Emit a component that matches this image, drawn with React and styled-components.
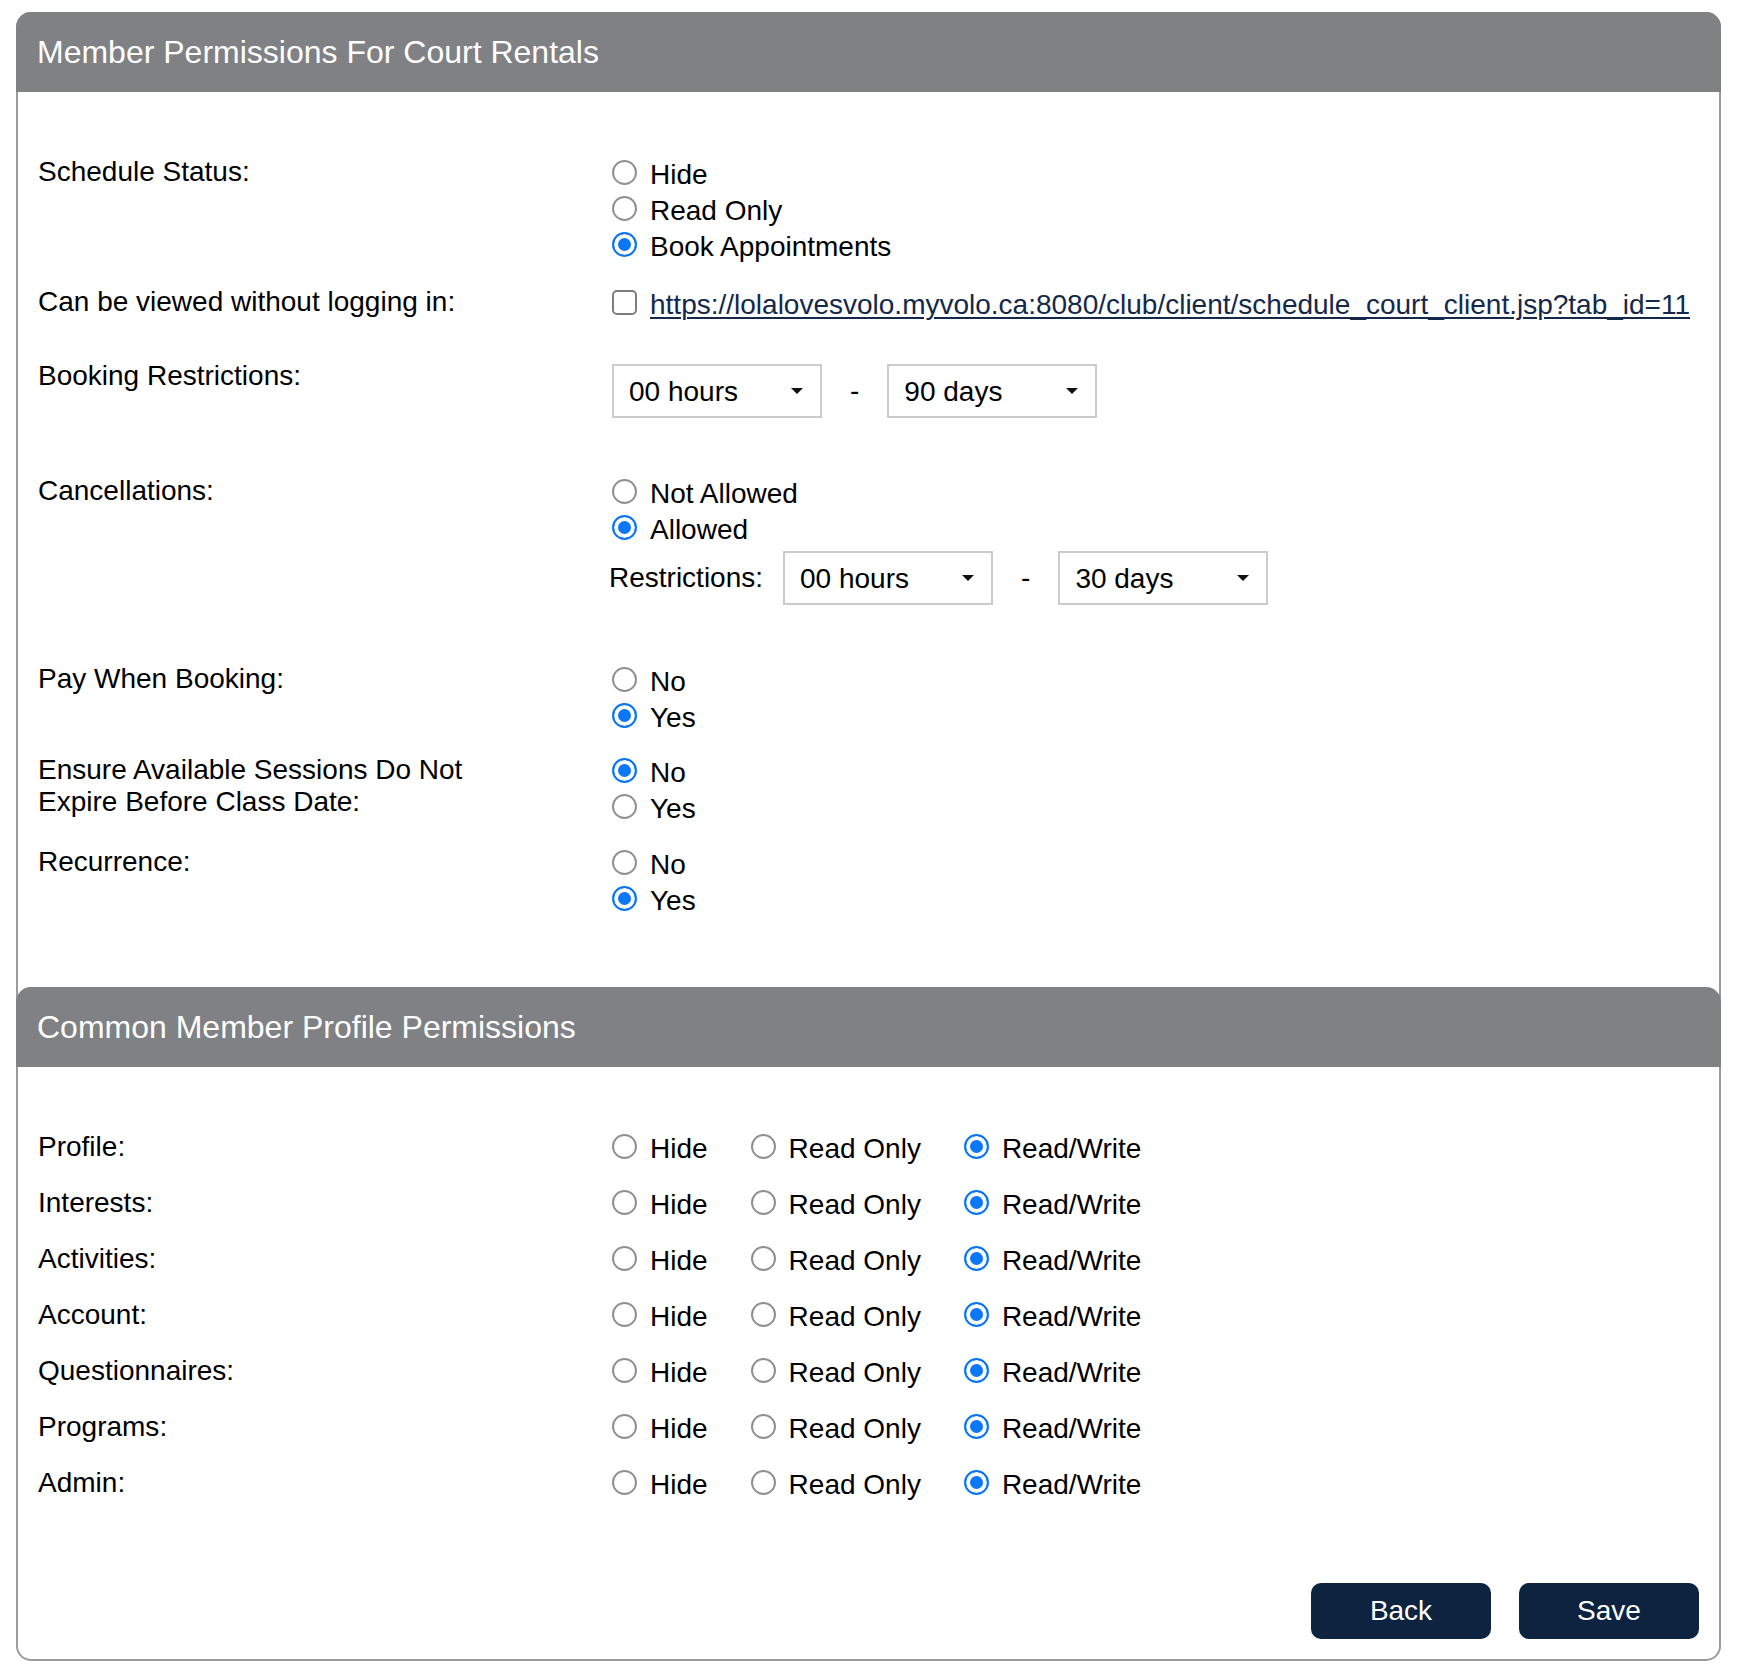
import React from 'react';
import styled, { createGlobalStyle } from 'styled-components';

const GlobalStyle = createGlobalStyle`
  body {
    margin: 0;
    background: #fff;
    color: #000;
    font-family: "Liberation Sans", Arial, Helvetica, sans-serif;
  }
`;

const Page = styled.div`
  padding: 12px 19px 14px 16px;
`;

const Card = styled.div`
  border: 2px solid #9b9b9b;
  border-radius: 15px;
  background: #fff;
`;

const Header = styled.div`
  height: 80px;
  margin: ${p => (p.$first ? '-2px -2px 0' : '0 -2px')};
  padding-left: 21px;
  display: flex;
  align-items: center;
  background: #808185;
  border-radius: 15px 15px 0 0;
  color: #fff;
  font-size: 32px;
`;

const Body = styled.div`
  padding: ${p => p.$pad};
`;

const Row = styled.div`
  display: grid;
  grid-template-columns: 574px 1fr;
  align-items: start;
  margin-bottom: ${p => p.$after || 0}px;
`;

const Label = styled.div`
  font-size: 28px;
  line-height: ${p => p.$lh || 36}px;
  padding-top: ${p => p.$top || 0}px;
`;

const Options = styled.div`
  display: flex;
  flex-direction: column;
  padding-top: 3px;
`;

const Option = styled.label`
  display: flex;
  align-items: center;
  gap: 13px;
  height: 36px;
  font-size: 28px;
  white-space: nowrap;
`;

const Radio = styled.input.attrs({ type: 'radio' })`
  appearance: none;
  flex: none;
  width: 25px;
  height: 25px;
  margin: 0 0 6px;
  border: 2px solid #909090;
  border-radius: 50%;
  background: #fff;

  &:checked {
    border-color: #0b76f6;
    background: #0b76f6;
    box-shadow: inset 0 0 0 4px #fff;
  }
`;

const Checkbox = styled.input.attrs({ type: 'checkbox' })`
  appearance: none;
  flex: none;
  width: 25px;
  height: 25px;
  margin: 0 0 6px;
  border: 2px solid #7d7d7d;
  border-radius: 5px;
  background: #fff;
`;

const Link = styled.a`
  color: #14284b;
  text-decoration: underline;
  text-underline-offset: 3px;
  text-decoration-thickness: 2px;
`;

const Range = styled.div`
  display: flex;
  align-items: center;
  margin-top: ${p => p.$top || 0}px;
`;

const Dash = styled.span`
  margin: 0 28px;
  font-size: 28px;
`;

const SelectWrap = styled.div`
  position: relative;
  flex: none;
  width: 210px;
  height: 54px;
`;

const Select = styled.select`
  appearance: none;
  box-sizing: border-box;
  width: 100%;
  height: 100%;
  padding: 0 0 0 15px;
  border: 2px solid #cbcbcb;
  border-radius: 0;
  background: #fff;
  color: #000;
  font-family: inherit;
  font-size: 28px;
  outline: none;
`;

const Caret = styled.svg`
  position: absolute;
  top: 50%;
  right: 19px;
  width: 12px;
  height: 6px;
  margin-top: -3px;
  pointer-events: none;
`;

const Restrictions = styled.div`
  display: flex;
  align-items: center;
  gap: 20px;
  margin: 3px 0 0 -3px;
  font-size: 28px;
`;

const PermRow = styled.div`
  display: grid;
  grid-template-columns: 574px 1fr;
  align-items: center;
  height: 56px;
`;

const Inline = styled.div`
  display: flex;
  gap: 43px;
  margin-top: 4px;
`;

const Footer = styled.div`
  display: flex;
  justify-content: flex-end;
  gap: 28px;
  padding: 72px 20px 20px;
`;

const Button = styled.button`
  width: 180px;
  height: 56px;
  border: none;
  border-radius: 10px;
  background: #0d2340;
  color: #fff;
  font-family: inherit;
  font-size: 28px;
  cursor: pointer;
`;

const Dropdown = ({ value, options }) => (
  <SelectWrap>
    <Select defaultValue={value}>
      {options.map(o => <option key={o}>{o}</option>)}
    </Select>
    <Caret viewBox="0 0 12 6">
      <path d="M0 0h12L6 6z" fill="#111" />
    </Caret>
  </SelectWrap>
);

const hours = ['00 hours', '01 hours', '02 hours', '06 hours', '12 hours', '24 hours'];
const days = ['7 days', '14 days', '30 days', '60 days', '90 days'];

const RadioList = ({ name, items, checked }) => (
  <Options>
    {items.map(item => (
      <Option key={item}>
        <Radio name={name} defaultChecked={item === checked} />
        {item}
      </Option>
    ))}
  </Options>
);

const profileRows = ['Profile', 'Interests', 'Activities', 'Account', 'Questionnaires', 'Programs', 'Admin'];
const levels = ['Hide', 'Read Only', 'Read/Write'];

const App = () => {
  return (
    <>
      <GlobalStyle />
      <Page>
        <Card>
          <Header $first>Member Permissions For Court Rentals</Header>
          <Body $pad="62px 20px 68px">
            <Row $after={19}>
              <Label>Schedule Status:</Label>
              <RadioList name="schedule" items={['Hide', 'Read Only', 'Book Appointments']} checked="Book Appointments" />
            </Row>
            <Row $after={35}>
              <Label>Can be viewed without logging in:</Label>
              <Options>
                <Option>
                  <Checkbox />
                  <Link href="#">https://lolalovesvolo.myvolo.ca:8080/club/client/schedule_court_client.jsp?tab_id=11</Link>
                </Option>
              </Options>
            </Row>
            <Row $after={55}>
              <Label>Booking Restrictions:</Label>
              <Range $top={6}>
                <Dropdown value="00 hours" options={hours} />
                <Dash>-</Dash>
                <Dropdown value="90 days" options={days} />
              </Range>
            </Row>
            <Row $after={56}>
              <Label>Cancellations:</Label>
              <div>
                <RadioList name="cancel" items={['Not Allowed', 'Allowed']} checked="Allowed" />
                <Restrictions>
                  Restrictions:
                  <Range>
                    <Dropdown value="00 hours" options={hours} />
                    <Dash>-</Dash>
                    <Dropdown value="30 days" options={days} />
                  </Range>
                </Restrictions>
              </div>
            </Row>
            <Row $after={16}>
              <Label>Pay When Booking:</Label>
              <RadioList name="pay" items={['No', 'Yes']} checked="Yes" />
            </Row>
            <Row $after={17}>
              <Label $lh={32} $top={2}>Ensure Available Sessions Do Not<br />Expire Before Class Date:</Label>
              <RadioList name="expire" items={['No', 'Yes']} checked="No" />
            </Row>
            <Row>
              <Label>Recurrence:</Label>
              <RadioList name="recur" items={['No', 'Yes']} checked="Yes" />
            </Row>
          </Body>

          <Header>Common Member Profile Permissions</Header>
          <Body $pad="52px 20px 0">
            {profileRows.map(row => (
              <PermRow key={row}>
                <Label>{row}:</Label>
                <Inline>
                  {levels.map(level => (
                    <Option key={level}>
                      <Radio name={`perm-${row}`} defaultChecked={level === 'Read/Write'} />
                      {level}
                    </Option>
                  ))}
                </Inline>
              </PermRow>
            ))}
          </Body>
          <Footer>
            <Button>Back</Button>
            <Button>Save</Button>
          </Footer>
        </Card>
      </Page>
    </>
  );
};

export default App;
